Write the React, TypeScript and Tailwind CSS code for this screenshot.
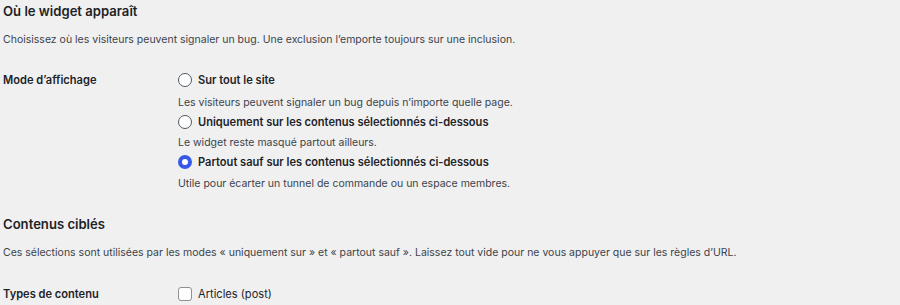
import React from "react";

function Radio({ checked }: { checked?: boolean }) {
  return checked ? (
    <span className="inline-block w-[14px] h-[14px] rounded-full border-[4px] border-[#3858e9] bg-white shrink-0" />
  ) : (
    <span className="inline-block w-[14px] h-[14px] rounded-full border border-[#50575e] bg-white shrink-0" />
  );
}

export default function App() {
  const font = "font-['Inter','Liberation_Sans',sans-serif]";
  return (
    <div className={`w-[900px] h-[305px] overflow-hidden bg-[#f0f0f1] text-[#1d2327] px-[3px] ${font}`}>
      <h2 className="text-[13.1px] leading-[22px] font-semibold">Où le widget apparaît</h2>
      <p className="mt-[9px] text-[10.5px] leading-[18px] text-[#3c434a]">
        Choisissez où les visiteurs peuvent signaler un bug. Une exclusion l’emporte toujours sur une inclusion.
      </p>
      <div className="mt-[21px] flex">
        <div className="w-[175px] shrink-0 text-[11.1px] leading-[20px] font-semibold">Mode d’affichage</div>
        <div className="flex flex-col">
          <label className="flex items-center gap-[6px] h-[20px] text-[11.1px] font-semibold">
            <Radio />
            <span>Sur tout le site</span>
          </label>
          <p className="mt-[4px] text-[10.5px] leading-[18px] text-[#3c434a]">Les visiteurs peuvent signaler un bug depuis n’importe quelle page.</p>
          <label className="flex items-center gap-[6px] h-[20px] text-[11.1px] font-semibold">
            <Radio />
            <span>Uniquement sur les contenus sélectionnés ci-dessous</span>
          </label>
          <p className="mt-[2px] text-[10.5px] leading-[18px] text-[#3c434a]">Le widget reste masqué partout ailleurs.</p>
          <label className="flex items-center gap-[6px] h-[20px] text-[11.1px] font-semibold">
            <Radio checked />
            <span>Partout sauf sur les contenus sélectionnés ci-dessous</span>
          </label>
          <p className="mt-[3px] text-[10.5px] leading-[18px] text-[#3c434a]">Utile pour écarter un tunnel de commande ou un espace membres.</p>
        </div>
      </div>
      <h2 className="mt-[20px] text-[13.1px] leading-[22px] font-semibold">Contenus ciblés</h2>
      <p className="mt-[9px] text-[10.5px] leading-[18px] text-[#3c434a]">
        Ces sélections sont utilisées par les modes « uniquement sur » et « partout sauf ». Laissez tout vide pour ne vous appuyer que sur les règles d’URL.
      </p>
      <div className="mt-[22px] flex">
        <div className="w-[175px] shrink-0 text-[11.1px] leading-[20px] font-semibold">Types de contenu</div>
        <label className="flex items-center gap-[6px] h-[20px] text-[11.1px]">
          <span className="inline-block w-[14px] h-[14px] rounded-[3px] border border-[#8c8f94] bg-white shrink-0" />
          <span>Articles (post)</span>
        </label>
      </div>
    </div>
  );
}
